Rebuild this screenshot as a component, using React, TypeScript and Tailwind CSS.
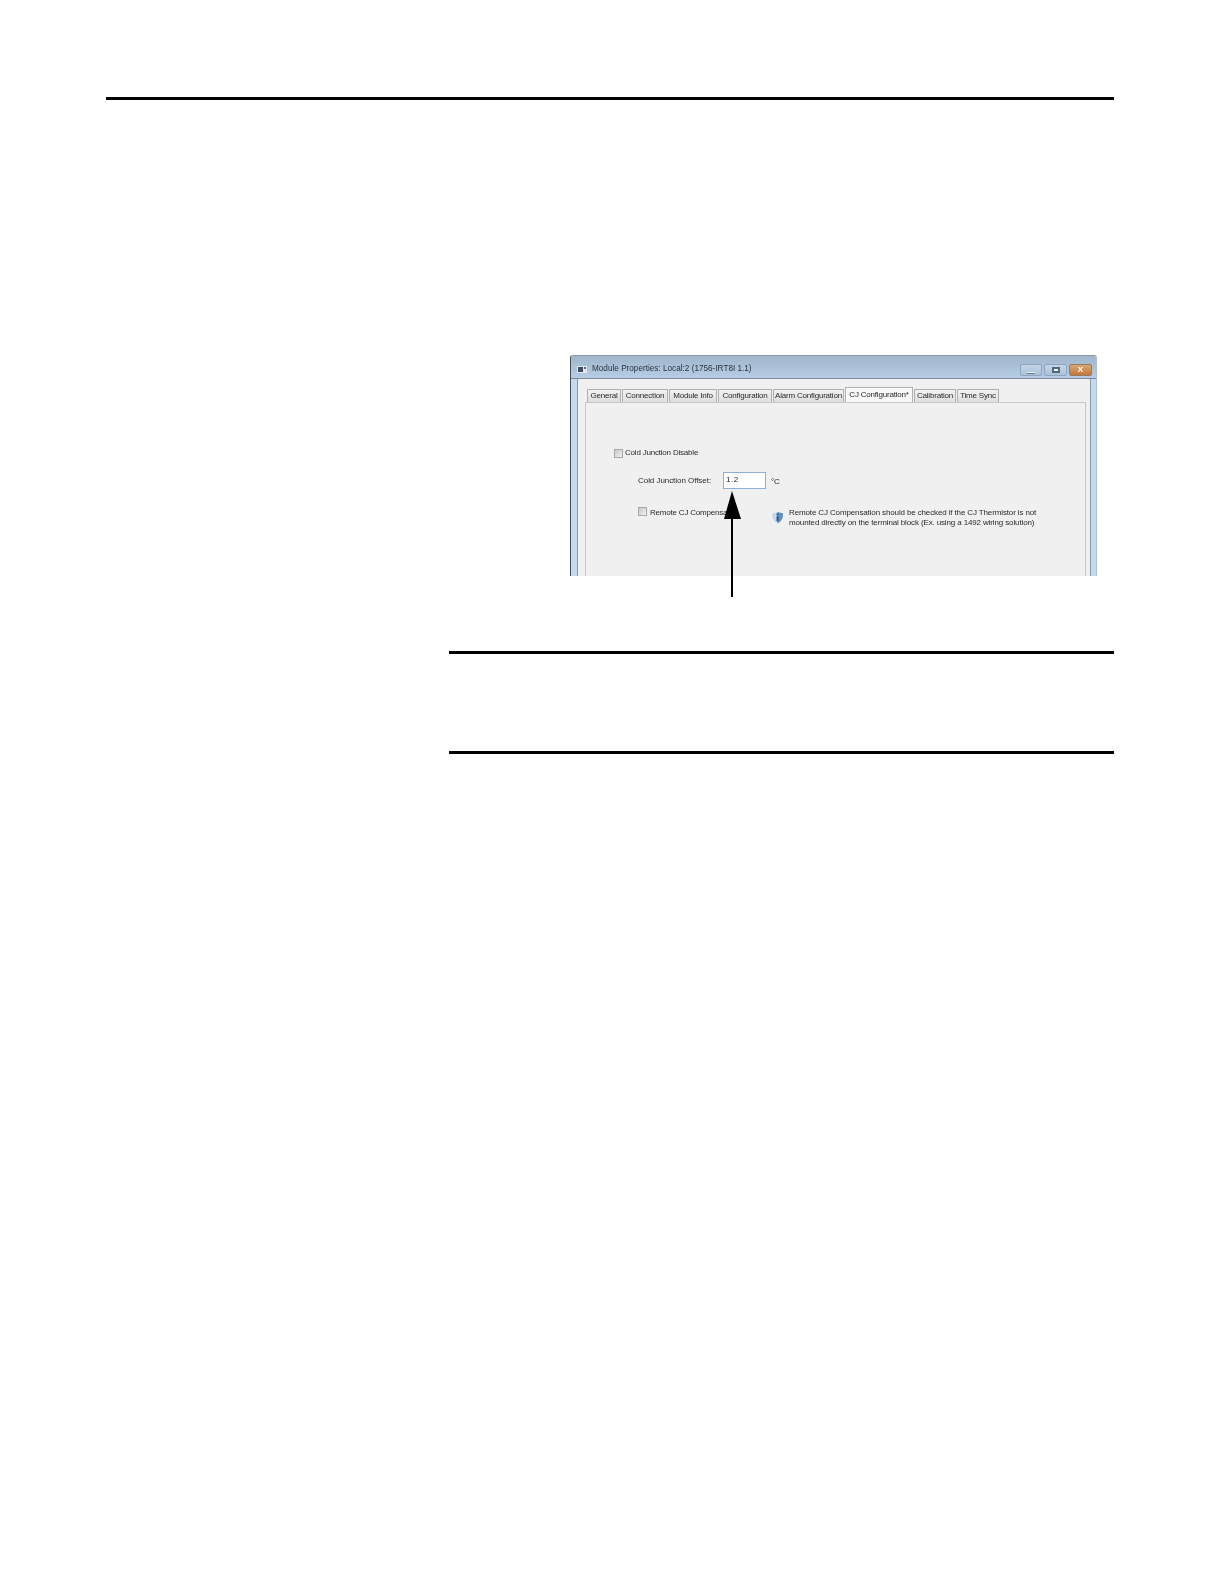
import React from "react";

const tabs: [string, string][] = [
  ["General", "w-[34px]"],
  ["Connection", "w-[46px]"],
  ["Module Info", "w-[48px]"],
  ["Configuration", "w-[54px]"],
  ["Alarm Configuration", "w-[71px]"],
];
const tabsAfter: [string, string][] = [
  ["Calibration", "w-[42px]"],
  ["Time Sync", "w-[42px]"],
];

function Tab({ label, width }: { label: string; width: string }) {
  return (
    <div className={`${width} h-[13px] flex items-center justify-center border border-b-0 border-[#b0b0b0] bg-gradient-to-b from-[#f2f2f2] to-[#dedede] text-[8px] tracking-[-0.2px] leading-none text-[#2a2a2a] whitespace-nowrap`}>
      {label}
    </div>
  );
}

function Check() {
  return <div className="w-[9px] h-[9px] shrink-0 border border-[#a8a8a8] bg-gradient-to-br from-[#c8c8c8] to-[#f2f2f2]" />;
}

export default function App() {
  return (
    <div className="relative w-[1224px] h-[1584px] bg-white pt-[97px] font-['Liberation_Sans',sans-serif]">
      <div className="ml-[106px] w-[1008px] h-[3px] bg-black" />

      <div className="ml-[570px] mt-[255px] w-[527px] h-[221px] overflow-hidden rounded-t-[3px] border-t border-l border-r border-t-[#8d99a3] border-l-[#3f4d58] border-r-[#aebccb] bg-[#c4daf0] flex flex-col blur-[0.35px]">
        <div className="h-[23px] shrink-0 flex items-center pt-[5px] pl-[6px] pr-[4px] border-b border-[#7d8a96] bg-gradient-to-b from-[#9fb6cc] to-[#b6cde5]">
          <svg width="10" height="7" viewBox="0 0 10 7" className="shrink-0">
            <rect width="10" height="7" fill="#e4e8ee" />
            <rect x="1" y="1" width="5" height="5" fill="#3f4d63" />
            <rect x="7" y="1" width="2" height="2" fill="#5d6d80" />
          </svg>
          <span className="ml-[5px] text-[8.2px] leading-none text-[#2b3440] whitespace-nowrap">Module Properties: Local:2 (1756-IRT8I 1.1)</span>
          <div className="ml-auto flex gap-[2px] items-center">
            <div className="w-[22px] h-[12px] rounded-[2px] border border-[#8ea6bf] bg-gradient-to-b from-[#c4d6e8] to-[#a9c1da] flex items-end justify-center pb-[1px]">
              <div className="w-[8px] h-[2px] bg-[#eef3f8] border-b border-[#66788c]" />
            </div>
            <div className="w-[23px] h-[12px] rounded-[2px] border border-[#8ea6bf] bg-gradient-to-b from-[#c4d6e8] to-[#a9c1da] flex items-center justify-center">
              <div className="w-[8px] h-[6px] bg-[#eef3f8] border-2 border-[#55677b]" />
            </div>
            <div className="w-[23px] h-[12px] rounded-[2px] border border-[#9a7a5c] bg-gradient-to-b from-[#dca572] to-[#c27a3a] flex items-center justify-center text-[8px] font-bold leading-none text-white">
              X
            </div>
          </div>
        </div>

        <div className="flex-1 min-h-0 ml-[6px] mr-[5px] border-x border-[#8a98a6] bg-[#f0f0f0] pl-[7px] pr-[4px] pt-[8px] flex flex-col">
          <div className="flex h-[15px] shrink-0 gap-[1px] items-end pl-[2px]">
            {tabs.map(([l, w]) => <Tab key={l} label={l} width={w} />)}
            <div className="w-[68px] h-[15px] flex items-center justify-center border border-b-0 border-[#b0b0b0] bg-[#f8f8f8] text-[8px] tracking-[-0.2px] leading-none text-[#2a2a2a] whitespace-nowrap">CJ Configuration*</div>
            {tabsAfter.map(([l, w]) => <Tab key={l} label={l} width={w} />)}
          </div>

          <div className="flex-1 min-h-0 border-x border-t border-[#c8c8c8] bg-[#f0f0f0] pl-[28px] pt-[45px] text-[8px] tracking-[-0.2px] leading-none text-[#2a2a2a]">
            <div className="flex items-center h-[10px]">
              <Check />
              <span className="ml-[2px] whitespace-nowrap">Cold Junction Disable</span>
            </div>

            <div className="flex items-center h-[17px] mt-[14px] pl-[24px]">
              <span className="w-[85px] tracking-[-0.05px] whitespace-nowrap">Cold Junction Offset:</span>
              <div className="w-[43px] h-[17px] border border-[#8fb0d6] bg-white pl-[2px] pb-[1px] flex items-center text-[8px] tracking-[0.5px] text-[#222]">1.2</div>
              <span className="ml-[5px] mt-[2px]">°C</span>
            </div>

            <div className="flex items-start mt-[18px] pl-[24px]">
              <Check />
              <div className="ml-[3px] w-[121px] shrink-0 pt-[2px] whitespace-nowrap">Remote CJ Compensa</div>
              <svg width="13" height="13" viewBox="0 0 13 13" className="shrink-0 mt-[4px]">
                <path d="M1 2.5 L6.5 1 L12 2.5 C12 8 9.5 11 6.5 12.5 C3.5 11 1 8 1 2.5 Z" fill="#c7d8ea" />
                <path d="M6.5 1 L12 2.5 C12 8 9.5 11 6.5 12.5 Z" fill="#5f8fc4" />
                <rect x="5.6" y="2.5" width="1.8" height="1.8" fill="#1f4f8a" />
                <rect x="5.6" y="5.2" width="1.8" height="5" fill="#1f4f8a" />
              </svg>
              <div className="ml-[5px] mt-[1px] tracking-[-0.13px] leading-[10px] whitespace-nowrap">
                <div>Remote CJ Compensation should be checked if the CJ Thermistor is not</div>
                <div>mounted directly on the terminal block (Ex. using a 1492 wiring solution)</div>
              </div>
            </div>
          </div>
        </div>
      </div>

      <div className="ml-[449px] mt-[75px] w-[665px] h-[3px] bg-black" />
      <div className="ml-[449px] mt-[97px] w-[665px] h-[3px] bg-black" />

      <svg className="absolute left-[720px] top-[490px]" width="24" height="108" viewBox="0 0 24 108">
        <path d="M12 1 L21 29 L4 29 Z" fill="#000" />
        <rect x="11" y="27" width="2" height="80" fill="#000" />
      </svg>
    </div>
  );
}
